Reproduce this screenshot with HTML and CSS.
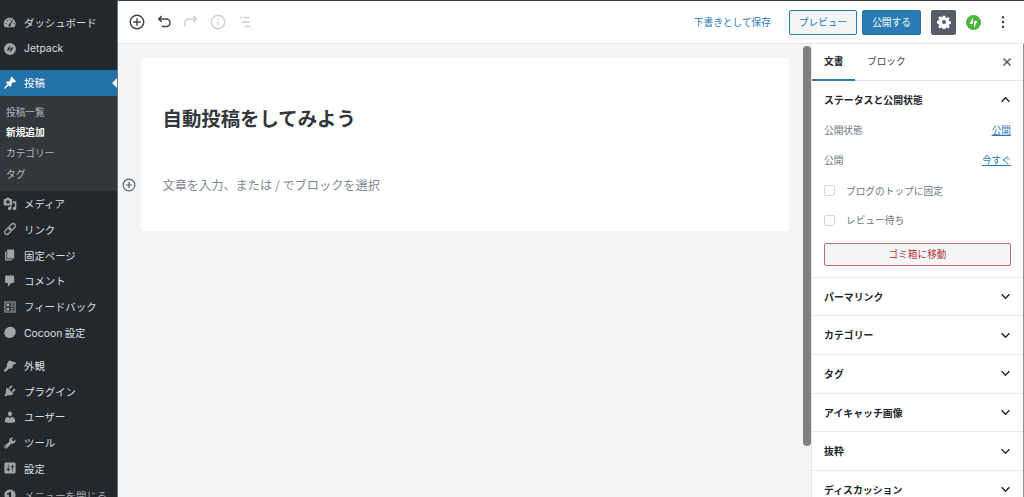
FILE: index.html
```html
<!DOCTYPE html>
<html lang="ja">
<head>
	<meta charset="UTF-8">
	<title>新規投稿を追加</title>
	<link rel="stylesheet" href="styles.css">
</head>
<body>
<div class="wrap">
	<!-- admin menu -->
	<nav class="admin_menu">
		<a class="menu_item"><svg class="menu_icon" viewBox="0 0 20 20"><path fill-rule="evenodd" d="M3.760 16h12.480c1.100-1.430 1.760-3.210 1.760-5.150 0-4.690-3.810-8.500-8.500-8.500S1 6.160 1 10.850c0 1.940.660 3.720 1.760 5.150zM9.500 4.300h1.400v1.400H9.500zM5.500 6h1.400v1.400H5.500zM3.600 10.200H5v1.400H3.600zM15 10.200h1.400v1.400H15zM13.200 5.600l1 .6-3.200 6.200a1.700 1.700 0 1 1-1.500-.8z"/></svg>ダッシュボード</a>
		<a class="menu_item"><svg class="menu_icon" viewBox="0 0 20 20"><path fill-rule="evenodd" d="M10 1.500a8.500 8.500 0 1 0 0 17 8.500 8.500 0 0 0 0-17zM9.400 4.500v7.500H5.400zM10.600 15.500V8h4z"/></svg><span class="latin">Jetpack</span></a>
		<div class="menu_gap top"></div>
		<a class="menu_item active"><svg class="menu_icon" viewBox="0 0 20 20"><path d="M10.440 3.020l1.820-1.820 6.360 6.350-1.830 1.820c-1.050-.68-2.480-.57-3.410.36l-.75.75c-.92.93-1.040 2.350-.35 3.410l-1.830 1.820-2.410-2.410-2.800 2.790c-.42.42-3.380 2.710-3.800 2.290s1.860-3.390 2.280-3.810l2.790-2.790L4.100 9.360l1.830-1.820c1.050.69 2.480.57 3.400-.36l.75-.75c.93-.92 1.050-2.350.36-3.410z"/></svg>投稿</a>
		<div class="sub_menu">
			<a class="sub_item">投稿一覧</a>
			<a class="sub_item current">新規追加</a>
			<a class="sub_item">カテゴリー</a>
			<a class="sub_item">タグ</a>
		</div>
		<a class="menu_item"><svg class="menu_icon" viewBox="0 0 20 20"><path fill-rule="evenodd" d="M13 11V4c0-.55-.45-1-1-1h-1.670L9 1H5L3.670 3H2c-.55 0-1 .45-1 1v7c0 .55.45 1 1 1h10c.55 0 1-.45 1-1zM7 4.500c1.380 0 2.500 1.120 2.500 2.500S8.380 9.500 7 9.500 4.500 8.380 4.500 7 5.620 4.500 7 4.500zM14 6h5v10.500c0 1.380-1.120 2.500-2.500 2.500S14 17.880 14 16.500s1.120-2.500 2.500-2.500c.17 0 .34.020.5.050V9h-3V6zm-4 8.050V13h2v3.500c0 1.380-1.120 2.500-2.500 2.500S7 17.880 7 16.500 8.120 14 9.500 14c.17 0 .34.020.5.050z"/></svg>メディア</a>
		<a class="menu_item"><svg class="menu_icon" viewBox="0 0 20 20"><g transform="rotate(-45 10 10)" fill="none" stroke="#a0a5aa" stroke-width="1.900"><rect x="0.500" y="6.800" width="10.500" height="6.400" rx="3.200"/><rect x="9" y="6.800" width="10.500" height="6.400" rx="3.200"/></g></svg>リンク</a>
		<a class="menu_item"><svg class="menu_icon" viewBox="0 0 20 20"><path d="M6 15V2h10v13H6zm-1 1h8v2H3V5h2v11z"/></svg>固定ページ</a>
		<a class="menu_item"><svg class="menu_icon" viewBox="0 0 20 20"><path d="M5 2h9c1.100 0 2 .9 2 2v7c0 1.100-.9 2-2 2h-2l-5 5v-5H5c-1.100 0-2-.9-2-2V4c0-1.100.9-2 2-2z"/></svg>コメント</a>
		<a class="menu_item"><svg class="menu_icon" viewBox="0 0 20 20"><path fill-rule="evenodd" d="M2 2h16v16H2zM3.500 3.500v13h13v-13zM5 5h4v4H5zM5 11h4v4H5zM11 5h4v1.500h-4zM11 8h4v1.500h-4zM11 11h4v1.500h-4zM11 14h4v1.500h-4z"/></svg>フィードバック</a>
		<a class="menu_item"><svg class="menu_icon" viewBox="0 0 20 20"><ellipse cx="10" cy="10.500" rx="8.500" ry="7.800" transform="rotate(-40 10 10.500)"/></svg><span><span class="latin">Cocoon</span> 設定</span></a>
		<div class="menu_gap"></div>
		<a class="menu_item"><svg class="menu_icon" viewBox="0 0 20 20"><path d="M7.500 3.500l2-1.500 8.500 3 1 1.500-5 2 -.5 4-2.500 1.500-6-5zM6.300 9.500l3.700 3.500-7 5.500-2-1.500z"/></svg>外観</a>
		<a class="menu_item"><svg class="menu_icon" viewBox="0 0 20 20"><path d="M13.110 4.360L9.870 7.600 8 5.730l3.240-3.240c.350-.340 1.050-.2 1.560.32.520.51.660 1.210.31 1.550zm-8 1.770l.910-1.120 9.010 9.010-1.190.84c-.710.710-2.630 1.160-3.820 1.160H6.140L4.900 17.260c-.590.590-1.540.59-2.120 0-.590-.58-.590-1.530 0-2.120l1.240-1.240v-3.880c0-1.130.4-3.190 1.090-3.890zm7.260 3.970l3.240-3.240c.340-.350 1.040-.2 1.550.31.520.52.660 1.220.320 1.570l-3.240 3.240z"/></svg>プラグイン</a>
		<a class="menu_item"><svg class="menu_icon" viewBox="0 0 20 20"><path d="M10 9.250c-2.270 0-2.730-3.440-2.730-3.440C7 4.020 7.820 2 9.970 2c2.160 0 2.980 2.020 2.710 3.810 0 0-.41 3.440-2.680 3.440zm0 2.570L12.720 10c2.390 0 4.520 2.330 4.520 4.530v2.490s-3.650 1.130-7.240 1.130c-3.650 0-7.240-1.130-7.240-1.130v-2.490c0-2.250 1.940-4.480 4.470-4.480z"/></svg>ユーザー</a>
		<a class="menu_item"><svg class="menu_icon" viewBox="0 0 20 20"><path fill-rule="evenodd" d="M16.680 9.770c-1.340 1.340-3.300 1.670-4.950.99l-5.410 6.520c-.99.990-2.590.99-3.580 0s-.99-2.590 0-3.570l6.520-5.420c-.68-1.650-.35-3.610.99-4.950 1.280-1.280 3.120-1.620 4.720-1.060l-2.890 2.890 2.820 2.820 2.860-2.870c.53 1.580.18 3.390-1.080 4.650zM3.810 16.210c.4.390 1.030.39 1.420 0 .4-.4.4-1.030 0-1.430-.39-.39-1.020-.39-1.420 0-.39.4-.39 1.030 0 1.430z"/></svg>ツール</a>
		<a class="menu_item"><svg class="menu_icon" viewBox="0 0 20 20"><path fill-rule="evenodd" d="M18 16V4c0-1.100-.9-2-2-2H4c-1.100 0-2 .9-2 2v12c0 1.100.9 2 2 2h12c1.100 0 2-.9 2-2zM8 11h1c.55 0 1 .45 1 1s-.45 1-1 1H8v1.500c0 .28-.22.5-.5.5s-.5-.22-.5-.5V13H6c-.55 0-1-.45-1-1s.45-1 1-1h1V5.500c0-.28.22-.5.5-.5s.5.22.5.5V11zm5-2h-1c-.55 0-1-.45-1-1s.45-1 1-1h1V5.500c0-.28.22-.5.5-.5s.5.22.5.5V7h1c.55 0 1 .45 1 1s-.45 1-1 1h-1v5.500c0 .28-.22.5-.5.5s-.5-.22-.5-.5V9z"/></svg>設定</a>
		<a class="menu_item muted"><svg class="menu_icon" viewBox="0 0 20 20"><path fill-rule="evenodd" d="M10 2a8 8 0 1 0 0 16 8 8 0 0 0 0-16zM11.500 5v10h-3V9.500L6 10V8z"/></svg>メニューを閉じる</a>
	</nav>

	<div class="editor">
		<header class="top_bar">
			<div class="tools">
				<svg class="tool" viewBox="0 0 24 24" fill="none" stroke="#444" stroke-width="1.900"><circle cx="12" cy="12" r="9"/><path d="M12 7v10M7 12h10"/></svg>
				<svg class="tool" viewBox="0 0 24 24" fill="none" stroke="#444" stroke-width="2"><path d="M9 4 5 8l4 4M5 8h10a5 5 0 0 1 0 10H9"/></svg>
				<svg class="tool" viewBox="0 0 24 24" fill="none" stroke="#ccd0d4" stroke-width="2"><path d="M15 4l4 4-4 4M19 8H9a5 5 0 0 0-5 5v5"/></svg>
				<svg class="tool" viewBox="0 0 24 24" fill="none" stroke="#ccd0d4" stroke-width="1.800"><circle cx="12" cy="12" r="9"/><path d="M12 11v6M12 7v2"/></svg>
				<svg class="tool" viewBox="0 0 24 24" fill="none" stroke="#ccd0d4" stroke-width="1.800"><path d="M5 6h3M10 6h8M8 12h11M11 18h8"/></svg>
			</div>
			<div class="actions">
				<a class="save_draft">下書きとして保存</a>
				<a class="btn btn_preview">プレビュー</a>
				<a class="btn btn_publish">公開する</a>
				<a class="btn_gear"><svg viewBox="0 0 20 20" width="14" height="14"><path fill="#fff" fill-rule="evenodd" d="M8.300 1h3.400l.5 2.500 1.500.7 2.200-1.400 2.300 2.300-1.400 2.200.7 1.500 2.500.5v3.400l-2.500.5-.7 1.500 1.400 2.200-2.300 2.300-2.200-1.400-1.500.7-.5 2.500H8.300l-.5-2.500-1.500-.7-2.200 1.400-2.300-2.300 1.400-2.200-.7-1.500L0 11.700V8.300l2.500-.5.700-1.500-1.400-2.200 2.300-2.300 2.200 1.400 1.500-.7zM10 7a3 3 0 1 0 0 6 3 3 0 0 0 0-6z"/></svg></a>
				<svg class="jetpack" viewBox="0 0 20 20"><circle cx="10" cy="10" r="10" fill="#4ab63c"/><path fill="#fff" d="M9.200 3v9H4.800zM10.800 17V8h4.400z"/></svg>
				<svg class="more" viewBox="0 0 4 18"><circle cx="2" cy="3" r="1.600"/><circle cx="2" cy="9" r="1.600"/><circle cx="2" cy="15" r="1.600"/></svg>
			</div>
		</header>

		<div class="editor_body">
			<main class="canvas">
				<div class="post_card">
					<h1 class="post_title">自動投稿をしてみよう</h1>
					<p class="post_para">文章を入力、または / でブロックを選択</p>
					<svg class="inline_add" viewBox="0 0 24 24" fill="none" stroke="#555d66" stroke-width="2"><circle cx="12" cy="12" r="10"/><path d="M12 6.500v11M6.500 12h11"/></svg>
				</div>
			</main>
			<div class="scroll_track"><div class="scroll_thumb"></div></div>

			<aside class="settings">
				<div class="tabs">
					<a class="tab on">文書</a>
					<a class="tab">ブロック</a>
					<svg class="close" viewBox="0 0 10 10" fill="none" stroke="#555d66" stroke-width="1.500"><path d="M1.500 1.500l7 7M8.500 1.500l-7 7"/></svg>
				</div>
				<section class="panel open">
					<div class="panel_head">ステータスと公開状態<svg class="chev" viewBox="0 0 12 8"><path d="M1.500 6.500 6 2l4.500 4.500"/></svg></div>
					<div class="row"><span>公開状態</span><a>公開</a></div>
					<div class="row"><span>公開</span><a>今すぐ</a></div>
					<label class="check"><i></i>ブログのトップに固定</label>
					<label class="check"><i></i>レビュー待ち</label>
					<a class="btn_trash">ゴミ箱に移動</a>
				</section>
				<section class="panel"><div class="panel_head">パーマリンク<svg class="chev" viewBox="0 0 12 8"><path d="M1.500 1.500 6 6l4.500-4.500"/></svg></div></section>
				<section class="panel"><div class="panel_head">カテゴリー<svg class="chev" viewBox="0 0 12 8"><path d="M1.500 1.500 6 6l4.500-4.500"/></svg></div></section>
				<section class="panel"><div class="panel_head">タグ<svg class="chev" viewBox="0 0 12 8"><path d="M1.500 1.500 6 6l4.500-4.500"/></svg></div></section>
				<section class="panel"><div class="panel_head">アイキャッチ画像<svg class="chev" viewBox="0 0 12 8"><path d="M1.500 1.500 6 6l4.500-4.500"/></svg></div></section>
				<section class="panel"><div class="panel_head">抜粋<svg class="chev" viewBox="0 0 12 8"><path d="M1.500 1.500 6 6l4.500-4.500"/></svg></div></section>
				<section class="panel"><div class="panel_head">ディスカッション<svg class="chev" viewBox="0 0 12 8"><path d="M1.500 1.500 6 6l4.500-4.500"/></svg></div></section>
			</aside>
		</div>
	</div>
</div>
</body>
</html>
```

FILE: styles.css
```css
* {
	box-sizing: border-box;
}
html, body {
	margin: 0;
	height: 100%;
	overflow: hidden;
}
body {
	font-family: "Noto Sans CJK JP", "Noto Sans", sans-serif;
	font-size: 10px;
	color: #32373c;
	background: #23282d;
}
.wrap {
	display: flex;
	height: 497px;
	overflow: hidden;
}

/* admin menu */
.admin_menu {
	flex: none;
	width: 118px;
	padding-top: 10px;
	background: #23282d;
	border-right: 1px solid #6c7278;
	color: #dcdfe1;
	font-size: 10.400px;
}
.menu_item {
	display: flex;
	align-items: center;
	height: 25.700px;
	white-space: nowrap;
	position: relative;
}
.menu_icon {
	flex: none;
	width: 14px;
	height: 14px;
	margin: 0 7px 0 3px;
	fill: #a0a5aa;
}
.latin {
	font-family: "Inter", "Noto Sans", sans-serif;
	font-size: 10.400px;
}
.menu_gap {
	height: 7.700px;
}
.menu_gap.top {
	height: 8.600px;
}
.menu_item.active {
	background: #2271a8;
	color: #fff;
}
.menu_item.active .menu_icon {
	fill: #fff;
}
.menu_item.active:after {
	content: "";
	position: absolute;
	right: 0;
	top: 8px;
	border: 5px solid transparent;
	border-right-color: #f3f4f5;
}
.menu_item.muted {
	color: #a0a5aa;
	padding-top: 2px;
}
.sub_menu {
	padding: 6px 0 6.500px;
	background: #32373c;
}
.sub_item {
	display: block;
	height: 20.700px;
	line-height: 20.700px;
	padding-left: 6px;
	font-size: 9.700px;
	color: #b4b9be;
}
.sub_item.current {
	color: #fff;
	font-weight: 700;
}

/* editor */
.editor {
	flex: 1;
	min-width: 0;
	display: flex;
	flex-direction: column;
	border-top: 1px solid #3a3f44;
	background: #f3f4f5;
}
.top_bar {
	flex: none;
	height: 43px;
	display: flex;
	justify-content: space-between;
	align-items: center;
	padding: 0 19px 0 10px;
	background: #fff;
	border-bottom: 1px solid #e2e4e7;
}
.tools {
	display: flex;
	align-items: center;
	gap: 9px;
}
.tool {
	width: 18px;
	height: 18px;
}
.actions {
	display: flex;
	align-items: center;
}
.save_draft {
	color: #2a7cb5;
	font-size: 9.700px;
	margin-right: 18px;
}
.btn {
	display: flex;
	align-items: center;
	justify-content: center;
	height: 25px;
	border-radius: 2px;
	font-size: 9.700px;
}
.btn_preview {
	width: 68px;
	margin-right: 5px;
	color: #2a7cb5;
	background: #f3f5f6;
	border: 1px solid #2a7cb5;
}
.btn_publish {
	width: 59px;
	margin-right: 10px;
	color: #fff;
	background: #2a7cb5;
	border: 1px solid #2671a6;
}
.btn_gear {
	display: flex;
	align-items: center;
	justify-content: center;
	width: 25px;
	height: 25px;
	border-radius: 2px;
	background: #555d66;
	margin-right: 9.500px;
}
.jetpack {
	width: 15px;
	height: 15px;
	margin-right: 20.500px;
}
.more {
	width: 4px;
	height: 14px;
	fill: #444;
}
.editor_body {
	flex: 1;
	min-height: 0;
	display: flex;
}
.canvas {
	flex: 1;
	min-width: 0;
	padding: 14px 12px 0 23px;
}
.post_card {
	position: relative;
	height: 173px;
	padding: 46px 22px 0 21.500px;
	background: #fff;
	border-radius: 3px;
}
.post_title {
	margin: 0;
	font-size: 19.400px;
	line-height: 28px;
	font-weight: 700;
	color: #32373c;
}
.post_para {
	margin: 44px 0 0;
	font-size: 12.200px;
	line-height: 18px;
	color: #7e8993;
}
.inline_add {
	position: absolute;
	left: -19px;
	top: 120px;
	width: 14px;
	height: 14px;
}
.scroll_track {
	flex: none;
	width: 11px;
	padding: 2px 0 0 2px;
	background: #f3f4f5;
	border-right: 1px solid #e2e4e7;
}
.scroll_thumb {
	height: 400px;
	background: #7f7f7f;
	border-radius: 4px;
}

/* settings sidebar */
.settings {
	flex: none;
	width: 212px;
	background: #fff;
	border-right: 1px solid #8a8f94;
}
.tabs {
	display: flex;
	align-items: center;
	height: 37px;
	position: relative;
	border-bottom: 1px solid #e2e4e7;
}
.tab {
	height: 37px;
	line-height: 34px;
	padding: 0 12px;
	font-size: 9.700px;
	color: #444;
	white-space: nowrap;
}
.tab.on {
	width: 43px;
	padding-right: 0;
	color: #23282d;
	font-weight: 700;
	border-bottom: 2px solid #2a7cb5;
}
.close {
	position: absolute;
	right: 11px;
	top: 13px;
	width: 10px;
	height: 10px;
}
.panel {
	border-bottom: 1px solid #e8eaeb;
	padding: 0 12px;
}
.panel_head {
	display: flex;
	justify-content: space-between;
	align-items: center;
	height: 37.700px;
	font-size: 9.900px;
	font-weight: 700;
	color: #23282d;
}
.chev {
	width: 11px;
	height: 7px;
	fill: none;
	stroke: #23282d;
	stroke-width: 1.700;
}
.panel.open {
	padding-bottom: 11px;
}
.panel.open .panel_head {
	height: 33.700px;
	padding-top: 4px;
}
.row {
	display: flex;
	justify-content: space-between;
	align-items: center;
	height: 30px;
	font-size: 9.700px;
	color: #6c7781;
}
.row a {
	color: #2a7cb5;
	text-decoration: underline;
}
.check {
	display: flex;
	align-items: center;
	height: 29.500px;
	font-size: 9.700px;
	color: #6c7781;
}
.row + .check {
	margin-top: 1.500px;
}
.check i {
	width: 11px;
	height: 11px;
	margin-right: 11px;
	border: 1px solid #d5d8db;
	border-radius: 2px;
}
.btn_trash {
	display: flex;
	align-items: center;
	justify-content: center;
	height: 22.500px;
	margin-top: 8px;
	font-size: 9.700px;
	color: #b83a3a;
	background: #f3f5f6;
	border: 1px solid #c46a6a;
	border-radius: 2px;
}
```
